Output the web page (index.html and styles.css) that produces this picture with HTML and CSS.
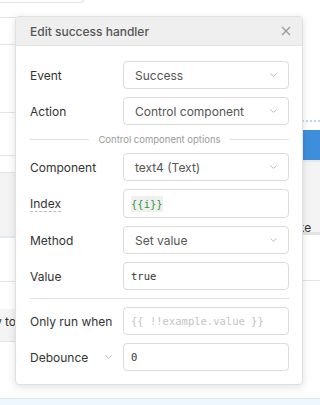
FILE: index.html
```html
<!DOCTYPE html>
<html lang="en">
  <head>
    <meta charset="UTF-8" />
    <meta name="viewport" content="width=device-width, initial-scale=1.0" />
    <title>Edit success handler</title>
    <link rel="stylesheet" href="styles.css">
  </head>
  <body>
    <div class="page">
      <div class="sides">
        <div class="side side-left">
          <div class="bg-card"></div>
          <div class="bg-row h15"></div>
          <div class="bg-row h27"></div>
          <div class="bg-row h68"></div>
          <div class="bg-row h43"></div>
          <div class="bg-row h17"></div>
          <div class="bg-grey h63"></div>
          <div class="bg-row h46 blue-top"></div>
          <div class="bg-row h27 plain"></div>
          <div class="bg-grey h32 plain"><span class="bg-text left-text">y to</span></div>
          <div class="bg-row h30 top-line"></div>
          <div class="bg-row grow plain"></div>
        </div>
        <div class="side side-right">
          <div class="spacer h121"></div>
          <div class="dots"></div>
          <div class="spacer h8"></div>
          <div class="blue-bar"></div>
          <div class="bg-grey h74 right-grey"><span class="bg-text right-text">cke</span></div>
          <div class="bg-row h46 top-line"></div>
          <div class="bg-row grow top-line"></div>
        </div>
      </div>
      <div class="bg-foot"></div>
    </div>

    <div class="modal">
      <div class="modal-header">
        <span class="modal-title">Edit success handler</span>
        <svg class="close" width="10" height="10" viewBox="0 0 10 10">
          <path d="M1 1 L9 9 M9 1 L1 9" stroke="#9a9a9a" stroke-width="1.3" fill="none" />
        </svg>
      </div>
      <div class="modal-body">
        <div class="row">
          <span class="label">Event</span>
          <div class="select">
            <span>Success</span>
            <svg class="chev" width="7" height="4" viewBox="0 0 7 4"><path d="M0.5 0.5 L3.5 3.3 L6.5 0.5" stroke="#bdbdbd" fill="none" /></svg>
          </div>
        </div>
        <div class="row">
          <span class="label">Action</span>
          <div class="select">
            <span>Control component</span>
            <svg class="chev" width="7" height="4" viewBox="0 0 7 4"><path d="M0.5 0.5 L3.5 3.3 L6.5 0.5" stroke="#bdbdbd" fill="none" /></svg>
          </div>
        </div>
        <div class="divider-text">
          <span class="line"></span>
          <span>Control component options</span>
          <span class="line"></span>
        </div>
        <div class="row">
          <span class="label">Component</span>
          <div class="select">
            <span>text4 (Text)</span>
            <svg class="chev" width="7" height="4" viewBox="0 0 7 4"><path d="M0.5 0.5 L3.5 3.3 L6.5 0.5" stroke="#bdbdbd" fill="none" /></svg>
          </div>
        </div>
        <div class="row">
          <span class="label"><span class="dotted">Index</span></span>
          <div class="code-input tall"><span class="tmpl">{{i}}</span></div>
        </div>
        <div class="row">
          <span class="label">Method</span>
          <div class="select">
            <span>Set value</span>
            <svg class="chev" width="7" height="4" viewBox="0 0 7 4"><path d="M0.5 0.5 L3.5 3.3 L6.5 0.5" stroke="#bdbdbd" fill="none" /></svg>
          </div>
        </div>
        <div class="row">
          <span class="label">Value</span>
          <div class="code-input"><span>true</span></div>
        </div>
        <div class="divider"></div>
        <div class="row">
          <span class="label">Only run when</span>
          <div class="code-input"><span class="placeholder">{{ !!example.value }}</span></div>
        </div>
        <div class="row">
          <span class="label label-chev">Debounce
            <svg width="7" height="4" viewBox="0 0 7 4"><path d="M0.5 0.5 L3.5 3.3 L6.5 0.5" stroke="#bdbdbd" fill="none" /></svg>
          </span>
          <div class="code-input"><span>0</span></div>
        </div>
      </div>
    </div>
  </body>
</html>
```

FILE: styles.css
```css
body {
  margin: 0;
  font-family: Inter, "Noto Sans", sans-serif;
  background: #fff;
  width: 320px;
  height: 405px;
  overflow: hidden;
  position: relative;
}
.page {
  display: flex;
  flex-direction: column;
  height: 405px;
}
.sides {
  flex: 1;
  display: flex;
  justify-content: space-between;
}
.side {
  width: 140px;
  display: flex;
  flex-direction: column;
}
.side-right {
  width: 30px;
}
.bg-card {
  width: 83px;
  height: 2px;
  border-bottom: 1px solid #e2e2e2;
  border-right: 1px solid #e2e2e2;
  border-bottom-right-radius: 3px;
}
.bg-row {
  border-bottom: 1px solid #e4e4e4;
  box-sizing: border-box;
}
.bg-row.plain {
  border-bottom: none;
}
.bg-row.top-line {
  border-bottom: none;
  border-top: 1px solid #e4e4e4;
}
.bg-row.blue-top {
  border-top: 2px solid #dcebf8;
}
.grow {
  flex: 1;
}
.bg-grey {
  background: #f4f4f4;
  box-sizing: border-box;
  position: relative;
  overflow: hidden;
}
.right-grey {
  border-top: 2px solid #e9e9e9;
  border-bottom: 2px solid #e2e2e2;
}
.bg-text {
  position: absolute;
  font-size: 12px;
  color: #333;
  white-space: nowrap;
}
.left-text {
  right: 124px;
  top: 5px;
}
.right-text {
  left: 1px;
  top: 58px;
}
.bg-foot {
  height: 6px;
  background: #eef6fe;
  border-top: 1px solid #dbe8f4;
}
.spacer { flex: none; }
.dots {
  height: 0;
  border-top: 2px dotted #b9d6f3;
}
.blue-bar {
  height: 30px;
  background: #3d8fdc;
}
.h8 { height: 8px; }
.h15 { height: 15px; }
.h17 { height: 17px; }
.h27 { height: 27px; }
.h30 { height: 30px; }
.h32 { height: 32px; }
.h43 { height: 43px; }
.h46 { height: 46px; }
.h63 { height: 63px; }
.h68 { height: 68px; }
.h74 { height: 74px; }
.h121 { height: 120px; }

.modal {
  position: absolute;
  left: 15px;
  top: 16px;
  width: 288px;
  background: #fff;
  border: 1px solid #e0e0e0;
  border-radius: 4px;
  box-shadow: 0 2px 8px rgba(0, 0, 0, 0.12);
  overflow: hidden;
  box-sizing: border-box;
}
.modal-header {
  height: 29px;
  background: #efefef;
  border-bottom: 1px solid #e3e3e3;
  display: flex;
  align-items: center;
  justify-content: space-between;
  padding: 0 11px 0 14px;
  box-sizing: border-box;
}
.modal-title {
  font-size: 12px;
  font-weight: 500;
  color: #555;
}
.modal-body {
  display: flex;
  flex-direction: column;
  gap: 8px;
  padding: 15px 13px 13px 14px;
}
.row {
  display: flex;
  align-items: center;
}
.label {
  width: 93px;
  flex: none;
  font-size: 12px;
  color: #333;
}
.dotted {
  border-bottom: 1px dashed #bbb;
  line-height: 15px;
}
.label-chev {
  display: flex;
  align-items: center;
  gap: 17px;
}
.select, .code-input {
  flex: 1;
  height: 28px;
  border: 1px solid #dcdcdc;
  border-radius: 4px;
  box-sizing: border-box;
  display: flex;
  align-items: center;
  justify-content: space-between;
  font-size: 12px;
  color: #555;
}
.select {
  padding: 0 11px 0 11px;
}
.code-input {
  padding: 0 7px;
  font-family: "DejaVu Sans Mono", monospace;
  font-size: 10.5px;
  color: #333;
}
.code-input.tall {
  height: 29px;
}
.tmpl {
  color: #2e9c3f;
  background: #f0f0f0;
  padding: 2px 0;
}
.placeholder {
  color: #c4c4c4;
}
.divider-text {
  display: flex;
  align-items: center;
  gap: 9px;
  height: 12px;
  font-size: 9.5px;
  color: #9a9a9a;
}
.divider-text .line {
  flex: 1;
  border-top: 1px solid #e0e0e0;
}
.divider {
  border-top: 1px solid #e0e0e0;
}
```
